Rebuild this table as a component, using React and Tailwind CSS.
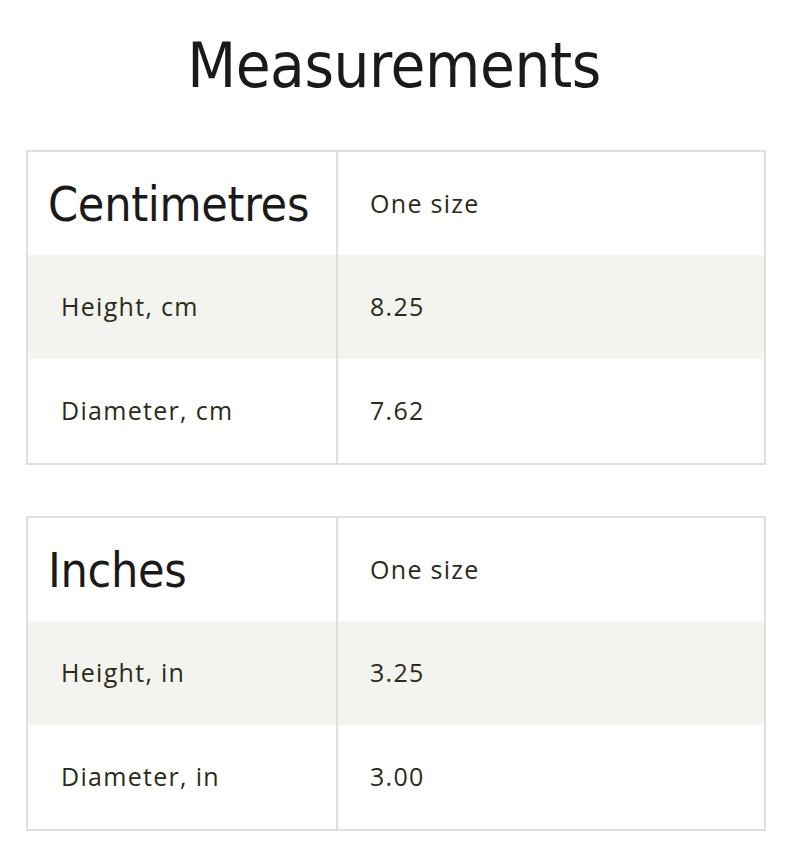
import React from "react";

const tables = [
  {
    title: "Centimetres",
    rows: [
      ["Height, cm", "8.25"],
      ["Diameter, cm", "7.62"],
    ],
  },
  {
    title: "Inches",
    rows: [
      ["Height, in", "3.25"],
      ["Diameter, in", "3.00"],
    ],
  },
];

const SizeTable = ({ title, rows }) => (
  <div className="grid grid-cols-[308px_1fr] border-2 border-[#e0e0d8]">
    <div className="h-[103px] flex items-center pl-[20px] text-[48px] text-[#1a1a1a] tracking-[-0.3px] font-['DejaVu_Sans_Condensed',sans-serif]">
      {title}
    </div>
    <div className="h-[103px] flex items-center pl-[32px] border-l-2 border-[#e0e0d8] text-[25px] tracking-[1.3px] text-[#2b2b18]">
      One size
    </div>
    {rows.map(([label, value], index) => (
      <React.Fragment key={label}>
        <div
          className={`h-[104px] flex items-center pl-[33px] text-[25px] tracking-[1.3px] text-[#2b2b18] ${
            index === 0 ? "bg-[#f3f3ef]" : "bg-white"
          }`}
        >
          {label}
        </div>
        <div
          className={`h-[104px] flex items-center pl-[32px] border-l-2 border-[#e0e0d8] text-[25px] tracking-[1.3px] text-[#2b2b18] ${
            index === 0 ? "bg-[#f3f3ef]" : "bg-white"
          }`}
        >
          {value}
        </div>
      </React.Fragment>
    ))}
  </div>
);

export default function App() {
  return (
    <div className="w-[791px] min-h-[846px] bg-white px-[26px] pr-[25px] font-['Open_Sans',sans-serif]">
      <h1 className="h-[150px] flex items-center justify-center pb-[18px] pr-[4px] text-[63px] tracking-[-0.4px] text-[#1a1a1a] font-['DejaVu_Sans_Condensed',sans-serif]">
        Measurements
      </h1>
      <div className="flex flex-col gap-[51px]">
        {tables.map((t) => (
          <SizeTable key={t.title} title={t.title} rows={t.rows} />
        ))}
      </div>
    </div>
  );
}
